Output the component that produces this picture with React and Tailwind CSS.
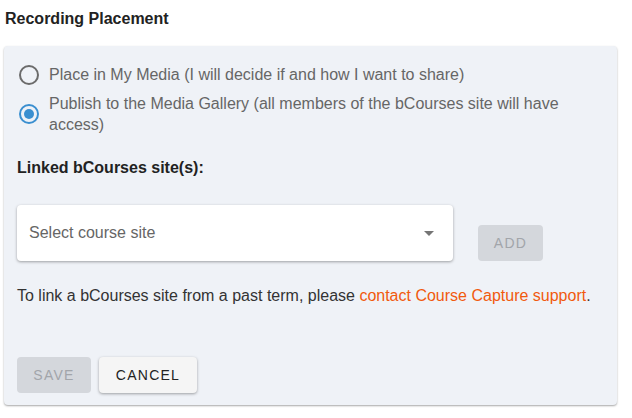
import React from "react";

export default function App() {
  return (
    <div className="w-[632px] h-[418px] bg-white text-[#212121]" style={{ fontFamily: '"Liberation Sans", Arial, sans-serif' }}>
      <div className="px-[5px] pt-[9px] text-[16px] font-bold leading-[20px] text-[#222]">Recording Placement</div>
      <div className="ml-[4px] mt-[17px] w-[613px] h-[359px] rounded-[4px] bg-[#eff2f7] shadow-[0_1px_2px_rgba(0,0,0,0.35)] px-[13px] pt-[18px]">
        <div className="flex flex-col gap-[8px] text-[16px] leading-[21px] text-[#666]">
          <label className="flex items-center gap-[10px] pl-[2px]">
            <span className="w-[20px] h-[20px] rounded-full border-2 border-[#6b6b6b] shrink-0" />
            <span>Place in My Media (I will decide if and how I want to share)</span>
          </label>
          <label className="flex items-center gap-[10px] pl-[2px]">
            <span className="w-[20px] h-[20px] rounded-full border-2 border-[#3a8fd0] shrink-0 flex items-center justify-center">
              <span className="w-[10px] h-[10px] rounded-full bg-[#3a8fd0]" />
            </span>
            <span className="w-[545px]">Publish to the Media Gallery (all members of the bCourses site will have access)</span>
          </label>
        </div>
        <div className="mt-[23px] text-[16px] font-bold leading-[20px] text-[#222]">Linked bCourses site(s):</div>
        <div className="mt-[27px] flex items-start">
          <div className="w-[436px] h-[56px] rounded-[4px] bg-white shadow-[0_1px_3px_rgba(0,0,0,0.35)] flex items-center justify-between pl-[12px] pr-[19px]">
            <span className="text-[16px] text-[#666]">Select course site</span>
            <svg width="10" height="5" viewBox="0 0 10 5"><path d="M0 0h10L5 5z" fill="#757575" /></svg>
          </div>
          <button className="ml-[25px] mt-[20px] w-[65px] h-[36px] rounded-[4px] bg-[#d4d7dc] text-[14px] tracking-[1.25px] text-[#a2a5aa]">ADD</button>
        </div>
        <div className="mt-[25px] text-[16px] leading-[20px] text-[#333]">
          To link a bCourses site from a past term, please <span className="text-[#f15a0e]">contact Course Capture support</span>.
        </div>
        <div className="mt-[51px] flex gap-[8px]">
          <button className="w-[74px] h-[36px] rounded-[4px] bg-[#d4d7dc] text-[14px] tracking-[1.25px] text-[#a2a5aa]">SAVE</button>
          <button className="w-[98px] h-[36px] rounded-[4px] bg-[#f5f5f5] shadow-[0_1px_3px_rgba(0,0,0,0.35)] text-[14px] tracking-[1.25px] text-[#222]">CANCEL</button>
        </div>
      </div>
    </div>
  );
}
